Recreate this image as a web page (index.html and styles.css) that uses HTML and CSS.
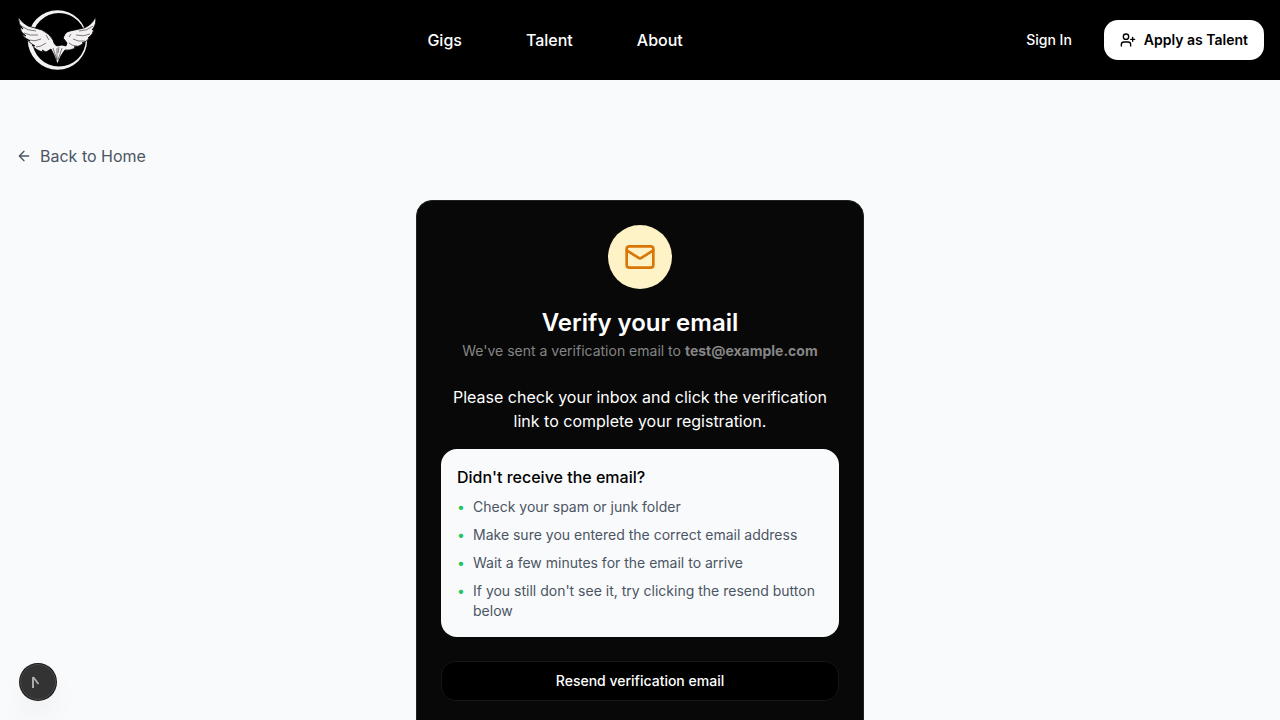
FILE: index.html
```html
<!DOCTYPE html>
<html lang="en">
<head>
<meta charset="utf-8">
<meta name="viewport" content="width=device-width, initial-scale=1">
<title>Verify your email</title>
<link rel="stylesheet" href="styles.css">
</head>
<body>
<header class="header">
  <a class="logo" href="#" aria-label="Home">
    <svg class="logo-mark" viewBox="0 0 84 64" aria-hidden="true">
      <path fill="#f4f1f3" fill-rule="evenodd" d="M41.500 2.300a29.700 29.700 0 1 0 0 59.400a29.700 29.700 0 1 0 0-59.400zM43 5a26.800 26.800 0 1 1 0 53.600a26.800 26.800 0 1 1 0-53.600z"/>
      <path fill="#f4f1f3" stroke="#000" stroke-width=".8" d="M2.500 9Q6 15 12 18L26 22Q34 26 37 32Q38 37 41 38L46 37L50 38L51 35L48 31L47 32Q48 24 54 23L68 20Q76 17 79.500 9Q81 16 76 22L78 21Q77 27 72 30L74 29Q71 34 66 35L68 35Q63 39 58 39L60 40Q53 43 49 42Q45 46 41.500 56Q38 46 35 41L30 44L26 42L28 44Q20 43 16 37L19 38Q13 35 11 31L14 33Q8 30 6 26L10 28Q4 24 4 19L7 21Q2 16 2.500 9z"/>
      <path fill="none" stroke="#000" stroke-width=".5" d="M5 18Q12 23 20 23M8 25Q14 28 22 27M13 32Q19 34 25 31M20 39Q25 39 30 35M77 18Q71 23 63 23M74 26Q68 29 60 27M69 33Q62 34 57 31M61 38Q56 38 53 35M37 40L41 52L41 40M46 40L42 52M43 39L42 45M30 27L33 32M55 26L53 29"/>
    </svg>
  </a>
  <nav class="nav" aria-label="Main">
    <a href="#">Gigs</a>
    <a href="#">Talent</a>
    <a href="#">About</a>
  </nav>
  <div class="actions">
    <a class="sign-in" href="#">Sign In</a>
    <a class="apply" href="#">
      <svg class="icon" viewBox="0 0 24 24" aria-hidden="true"><path d="M16 21v-2a4 4 0 0 0-4-4H6a4 4 0 0 0-4 4v2"/><circle cx="9" cy="7" r="4"/><path d="M19 8v6M22 11h-6"/></svg>
      Apply as Talent
    </a>
  </div>
</header>
<main class="page">
  <a class="back" href="#">
    <svg class="icon" viewBox="0 0 24 24" aria-hidden="true"><path d="m12 19-7-7 7-7M19 12H5"/></svg>
    Back to Home
  </a>
  <section class="card">
    <div class="card-head">
      <div class="badge">
        <svg class="icon mail" viewBox="0 0 24 24" aria-hidden="true"><rect width="20" height="16" x="2" y="4" rx="2"/><path d="m22 7-8.970 5.700a1.940 1.940 0 0 1-2.060 0L2 7"/></svg>
      </div>
      <h1 class="title">Verify your email</h1>
      <p class="subtitle">We've sent a verification email to <strong>test@example.com</strong></p>
    </div>
    <p class="message">Please check your inbox and click the verification link to complete your registration.</p>
    <div class="help">
      <h2 class="help-title">Didn't receive the email?</h2>
      <ul class="tips">
        <li>Check your spam or junk folder</li>
        <li>Make sure you entered the correct email address</li>
        <li>Wait a few minutes for the email to arrive</li>
        <li>If you still don't see it, try clicking the resend button below</li>
      </ul>
    </div>
    <button class="resend" type="button">Resend verification email</button>
  </section>
</main>
<button class="dev" type="button" aria-label="Open developer tools">
  <svg class="dev-mark" viewBox="0 0 16 16" aria-hidden="true">
    <path d="M3 14V3" fill="none" stroke="#b8b8b8" stroke-width="1.800"/>
    <path d="M3.200 3L8.500 10" fill="none" stroke="#b0b0b0" stroke-width="1.800"/>
  </svg>
</button>
</body>
</html>
```
FILE: styles.css
```css
* { box-sizing: border-box; }
body {
  margin: 0;
  background: #f9fafb;
  color: #000;
  font: 400 16px/24px Inter, "Liberation Sans", sans-serif;
}
h1, h2, p, ul { margin: 0; padding: 0; }
a { color: inherit; text-decoration: none; }
button { font: inherit; cursor: pointer; }
.icon {
  width: 16px;
  height: 16px;
  flex: none;
  fill: none;
  stroke: currentColor;
  stroke-width: 2;
  stroke-linecap: round;
  stroke-linejoin: round;
}
.header {
  display: flex;
  align-items: center;
  justify-content: space-between;
  height: 80px;
  padding: 0 16px;
  background: #000;
  color: #fff;
}
.logo, .logo-mark { display: block; width: 84px; height: 64px; }
.nav { display: flex; gap: 64px; font-weight: 500; }
.actions {
  display: flex;
  align-items: center;
  gap: 16px;
  font-size: 14px;
  line-height: 20px;
  font-weight: 600;
}
.sign-in { padding: 10px 16px; font-weight: 500; }
.apply {
  display: flex;
  align-items: center;
  gap: 8px;
  padding: 10px 16px;
  border-radius: 14px;
  background: #fff;
  color: #000;
}
.page { padding: 64px 16px; }
.back {
  display: flex;
  align-items: center;
  gap: 8px;
  width: fit-content;
  margin-bottom: 32px;
  color: #4b5563;
}
.card {
  max-width: 448px;
  margin: 0 auto;
  padding: 24px 24px 48px;
  border: 1px solid #1f2123;
  border-radius: 16px;
  background: #080808;
  color: #fff;
}
.card-head {
  display: flex;
  flex-direction: column;
  align-items: center;
  margin-bottom: 24px;
  text-align: center;
}
.badge {
  display: grid;
  place-items: center;
  width: 64px;
  height: 64px;
  margin-bottom: 16px;
  border-radius: 50%;
  background: #fef3c7;
  color: #d97706;
}
.mail { width: 32px; height: 32px; }
.title {
  font-size: 24px;
  line-height: 36px;
  font-weight: 600;
}
.subtitle { font-size: 14px; line-height: 20px; color: #858585; }
.message { margin-bottom: 16px; text-align: center; }
.help {
  margin-bottom: 24px;
  padding: 16px;
  border-radius: 16px;
  background: #f9fafb;
  color: #000;
}
.help-title { margin-bottom: 8px; font-size: 16px; font-weight: 500; }
.tips {
  display: grid;
  gap: 8px;
  list-style: none;
  font-size: 14px;
  line-height: 20px;
  color: #4b5563;
}
.tips li { display: flex; gap: 8px; }
.tips li::before { content: "•"; flex: none; width: 8px; color: #22c55e; }
.resend {
  display: block;
  width: 100%;
  padding: 9px 16px;
  border: 1px solid #171717;
  border-radius: 14px;
  background: #000;
  color: #fff;
  font-size: 14px;
  line-height: 20px;
  font-weight: 500;
}
.dev {
  position: fixed;
  left: 20px;
  bottom: 20px;
  display: grid;
  place-items: center;
  width: 36px;
  height: 36px;
  padding: 0;
  border: 1px solid #4a4a4a;
  border-radius: 50%;
  background: #333;
  box-shadow: 0 0 0 1px #171717, 0 16px 32px -8px rgba(0, 0, 0, .14);
}
.dev-mark { width: 16px; height: 16px; }
```
